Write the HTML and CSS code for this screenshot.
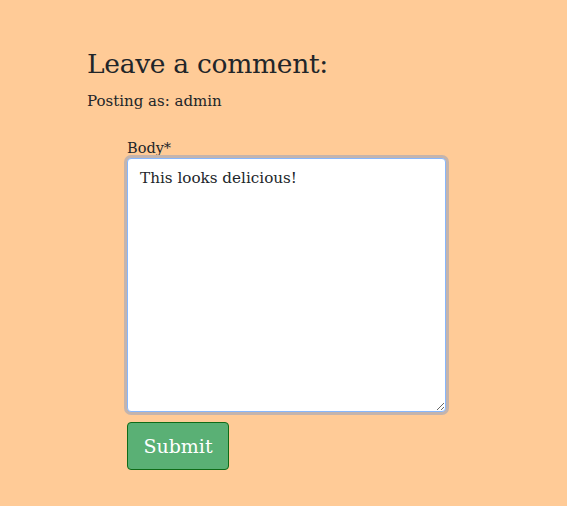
FILE: index.html
```html
<!DOCTYPE html>
<html>
<head>
<meta charset="utf-8">
<link rel="stylesheet" href="styles.css">
</head>
<body>
<div class="page">
  <h2 class="title">Leave a comment:</h2>
  <p class="posting">Posting as: admin</p>
  <form class="form">
    <label class="label" for="body">Body*</label>
    <textarea id="body" class="area">This looks delicious!</textarea>
    <button type="button" class="submit">Submit</button>
  </form>
</div>
</body>
</html>
```
FILE: styles.css
```css
html, body {
  margin: 0;
  padding: 0;
  background: #ffcb97;
}
body {
  font-family: "DejaVu Serif", "Liberation Serif", serif;
  color: #212529;
}
.page {
  padding: 46px 0 0 87px;
}
.title {
  margin: 0;
  font-size: 26.5px;
  font-weight: 400;
  line-height: 36px;
  letter-spacing: -0.3px;
}
.posting {
  margin: 9px 0 0 0;
  font-size: 15px;
  line-height: 20px;
}
.form {
  margin: 27px 0 0 40px;
  display: flex;
  flex-direction: column;
  align-items: flex-start;
}
.label {
  font-size: 14.5px;
  line-height: 20px;
  margin-bottom: 0;
}
.area {
  display: block;
  box-sizing: border-box;
  width: 319px;
  height: 254px;
  margin: 0;
  border: 1px solid #86b7fe;
  border-radius: 4px;
  background: #fff;
  padding: 7px 12px 6px;
  font-family: "DejaVu Serif", "Liberation Serif", serif;
  font-size: 15.2px;
  line-height: 24px;
  color: #212529;
  outline: none;
  resize: vertical;
  box-shadow: 0 0 0 3px #c4b4ad;
}
.submit {
  margin-top: 10px;
  box-sizing: border-box;
  width: 102px;
  height: 48px;
  background: #5ab075;
  border: 1px solid #0f6b17;
  border-radius: 4px;
  color: #fff;
  font-family: "DejaVu Serif", "Liberation Serif", serif;
  font-size: 19px;
  padding: 0;
}
```
